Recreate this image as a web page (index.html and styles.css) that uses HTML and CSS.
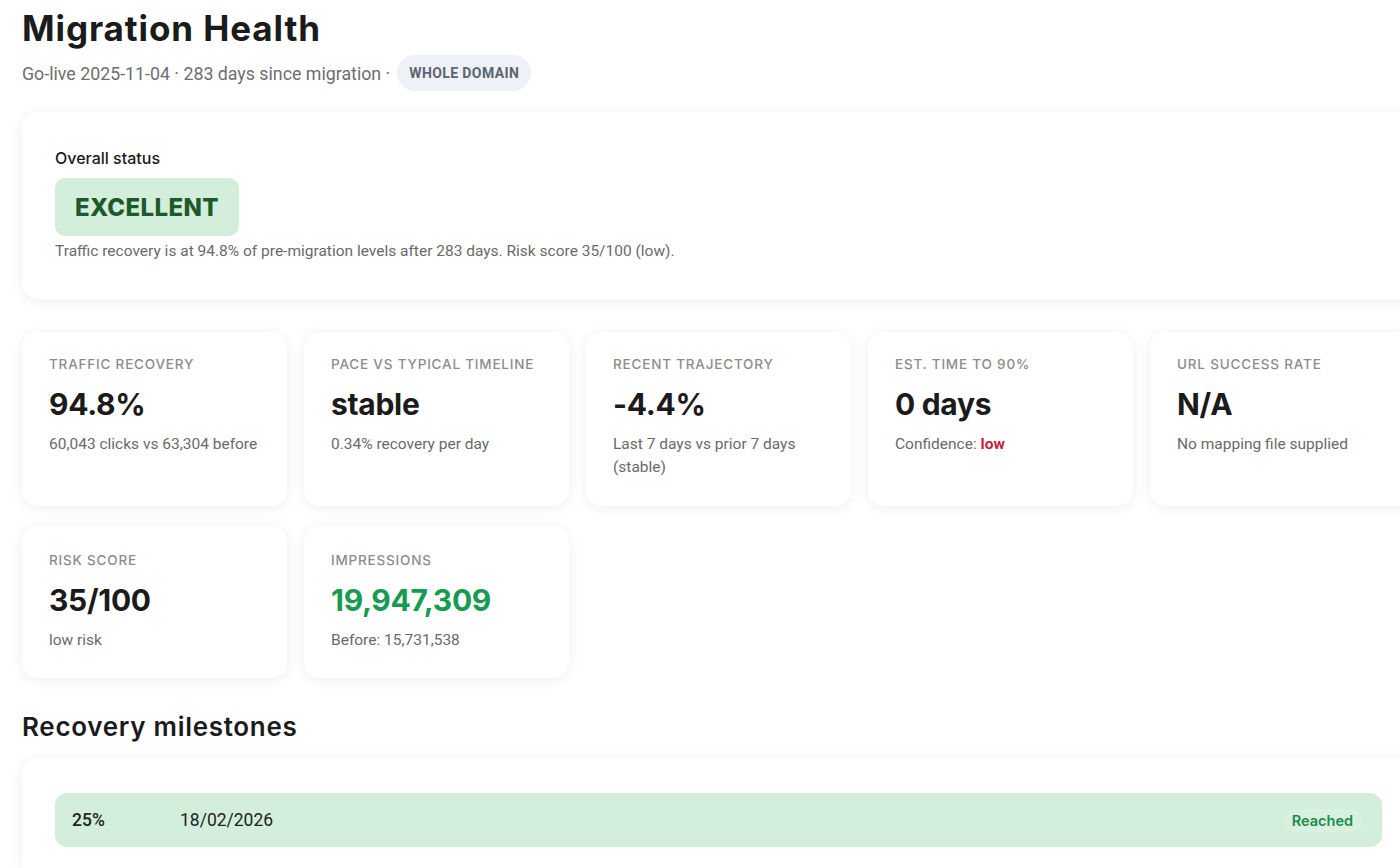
FILE: index.html
```html
<!DOCTYPE html>
<html>
<head>
<meta charset="utf-8">
<link rel="stylesheet" href="styles.css">
</head>
<body>
<div class="page">
  <h1 class="title">Migration Health</h1>
  <div class="subtitle">
    <span>Go-live 2025-11-04 · 283 days since migration ·</span>
    <span class="scope">WHOLE DOMAIN</span>
  </div>

  <section class="card status-card">
    <div class="status-label">Overall status</div>
    <div class="status-badge">EXCELLENT</div>
    <p class="status-desc">Traffic recovery is at 94.8% of pre-migration levels after 283 days. Risk score 35/100 (low).</p>
  </section>

  <div class="metrics">
    <div class="card metric">
      <div class="m-label">Traffic recovery</div>
      <div class="m-value">94.8%</div>
      <div class="m-sub">60,043 clicks vs 63,304 before</div>
    </div>
    <div class="card metric">
      <div class="m-label">Pace vs typical timeline</div>
      <div class="m-value">stable</div>
      <div class="m-sub">0.34% recovery per day</div>
    </div>
    <div class="card metric">
      <div class="m-label">Recent trajectory</div>
      <div class="m-value">-4.4%</div>
      <div class="m-sub">Last 7 days vs prior 7 days (stable)</div>
    </div>
    <div class="card metric">
      <div class="m-label">Est. time to 90%</div>
      <div class="m-value">0 days</div>
      <div class="m-sub">Confidence: <span class="low">low</span></div>
    </div>
    <div class="card metric">
      <div class="m-label">URL success rate</div>
      <div class="m-value">N/A</div>
      <div class="m-sub">No mapping file supplied</div>
    </div>
    <div class="card metric short">
      <div class="m-label">Risk score</div>
      <div class="m-value">35/100</div>
      <div class="m-sub">low risk</div>
    </div>
    <div class="card metric short">
      <div class="m-label">Impressions</div>
      <div class="m-value green">19,947,309</div>
      <div class="m-sub">Before: 15,731,538</div>
    </div>
  </div>

  <h2 class="section-title">Recovery milestones</h2>
  <section class="card milestones">
    <div class="milestone reached">
      <span class="ms-pct">25%</span>
      <span class="ms-date">18/02/2026</span>
      <span class="ms-state">Reached</span>
    </div>
  </section>
</div>
</body>
</html>
```

FILE: styles.css
```css
html, body {
  margin: 0;
  padding: 0;
  background: #ffffff;
  overflow: hidden;
}
body {
  font-family: Roboto, "Liberation Sans", sans-serif;
  color: #1f1f1f;
}
.page {
  width: 1393px;
  padding: 6px 0 0 22px;
}
.title {
  font-family: Inter, "Liberation Sans", sans-serif;
  font-weight: 700;
  font-size: 35px;
  letter-spacing: 0.9px;
  line-height: 44px;
  margin: 0;
  color: #1b1b1b;
}
.subtitle {
  display: flex;
  align-items: center;
  gap: 7px;
  margin-top: 5px;
  font-size: 17.8px;
  color: #6e6e6e;
}
.scope {
  background: #eef1f5;
  color: #5a6474;
  font-weight: 700;
  font-size: 14px;
  letter-spacing: 0.4px;
  border-radius: 18px;
  padding: 0 12px;
  height: 36px;
  display: inline-flex;
  align-items: center;
}
.card {
  background: #fff;
  border-radius: 16px;
  box-shadow: 0 2px 14px rgba(0, 0, 0, 0.07);
  box-sizing: border-box;
}
.status-card {
  margin-top: 21px;
  height: 187px;
  padding: 36px 33px 0;
}
.status-label {
  font-family: Inter, "Liberation Sans", sans-serif;
  font-weight: 500;
  font-size: 16px;
  color: #1b1b1b;
  line-height: 20px;
}
.status-badge {
  display: inline-flex;
  align-items: center;
  margin-top: 10px;
  height: 58px;
  padding: 0 20px;
  background: #d3eedb;
  border-radius: 10px;
  font-family: Inter, "Liberation Sans", sans-serif;
  font-weight: 800;
  font-size: 24px;
  letter-spacing: 0.4px;
  color: #1d5a2b;
}
.status-desc {
  margin: 6px 0 0;
  font-size: 15.5px;
  color: #6a6a6a;
  line-height: 18px;
}
.metrics {
  margin-top: 33px;
  display: grid;
  grid-template-columns: repeat(5, 1fr);
  column-gap: 17px;
  row-gap: 20px;
}
.metric {
  height: 174px;
  padding: 24px 27px 0;
}
.metric.short {
  height: 152px;
  padding-top: 26px;
}
.m-label {
  font-family: Inter, "Liberation Sans", sans-serif;
  font-weight: 500;
  font-size: 13.5px;
  letter-spacing: 0.8px;
  text-transform: uppercase;
  color: #8c8c8c;
  line-height: 16px;
}
.m-value {
  margin-top: 13px;
  font-family: Inter, "Liberation Sans", sans-serif;
  font-weight: 700;
  font-size: 30px;
  letter-spacing: -0.3px;
  line-height: 38px;
  color: #1b1b1b;
}
.m-value.green {
  color: #179a51;
}
.m-sub {
  margin-top: 10px;
  font-size: 15.5px;
  line-height: 23px;
  color: #6a6a6a;
}
.low {
  color: #c8203c;
  font-weight: 700;
}
.section-title {
  margin: 32px 0 0;
  font-family: Inter, "Liberation Sans", sans-serif;
  font-weight: 600;
  font-size: 26px;
  line-height: 34px;
  letter-spacing: 0.7px;
  color: #1b1b1b;
}
.milestones {
  margin-top: 14px;
  padding: 35px 33px 30px;
}
.milestone {
  display: flex;
  align-items: center;
  height: 54px;
  padding: 0 20px 0 17px;
  border-radius: 12px;
  background: #d3eedb;
  font-size: 17.5px;
  color: #222;
}
.ms-pct {
  width: 108px;
  font-weight: 500;
}
.ms-date {
  flex: 1;
}
.ms-state {
  font-family: Inter, "Liberation Sans", sans-serif;
  font-weight: 600;
  font-size: 14.5px;
  color: #1a8a4c;
  background: #d8f1df;
  border-radius: 12px;
  padding: 3px 9px;
}
```
